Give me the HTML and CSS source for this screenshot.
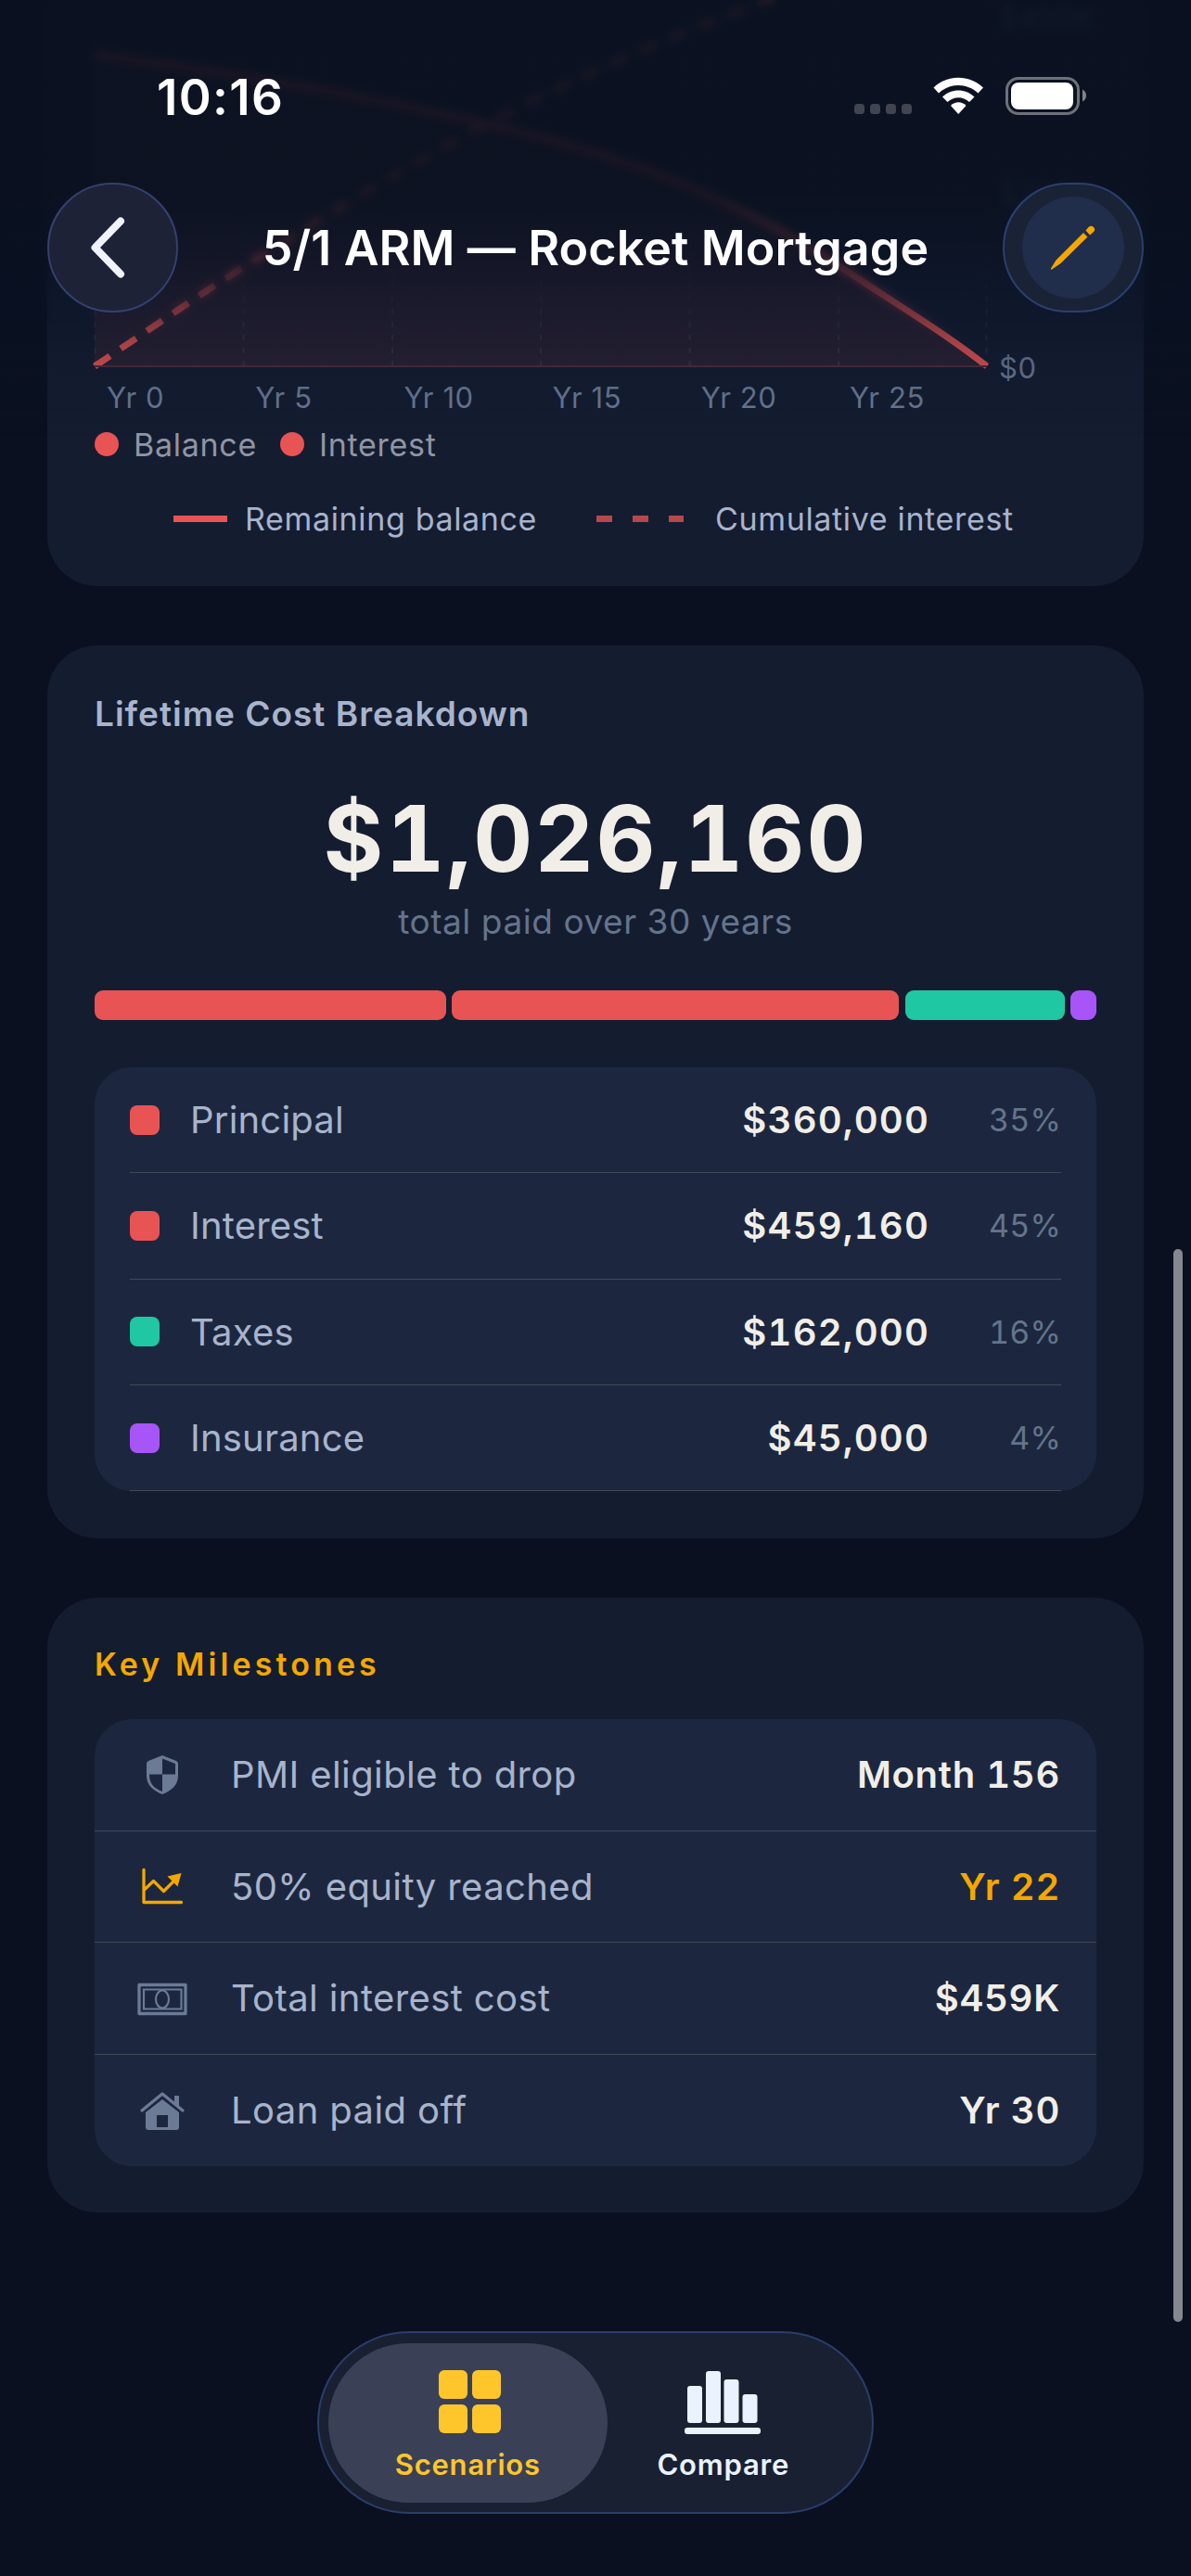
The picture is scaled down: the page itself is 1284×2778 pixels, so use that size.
FILE: index.html
```
<!doctype html>
<html lang="en">
<head>
<meta charset="UTF-8">
<title>5/1 ARM — Rocket Mortgage</title>
<link rel="stylesheet" href="styles.css">
</head>

<body>
  <main class="content">
    <section class="card chart-card">
      <div class="chart">
        <svg class="plot" width="962" height="400" viewBox="102 0 962 400">
          <g class="grid">
            <path d="M102.5 395V0M262.5 395V0M423 395V0M583 395V0M743.5 395V0M904 395V0M1063.5 395V0"/>
          </g>
          <path class="area" d="M102 59C250 78 400 104 540 137C680 170 800 217 908 289C965 327 1020 360 1064 395H102Z"/>
          <path class="balance" d="M102 59C250 78 400 104 540 137C680 170 800 217 908 289C965 327 1020 360 1064 395"/>
          <path class="interest" d="M102 395L219 316C290 270 350 232 410 198C520 132 680 50 845 -4"/>
          <path class="axis" d="M102 395H1064"/>
        </svg>
        <div class="y-labels">
          <span>$400K</span><span>$200K</span><span>$0</span>
        </div>
      </div>
      <div class="x-labels">
        <span>Yr 0</span><span>Yr 5</span><span>Yr 10</span><span>Yr 15</span><span>Yr 20</span><span>Yr 25</span>
      </div>
      <div class="series">
        <span class="dot"></span><span>Balance</span>
        <span class="dot second"></span><span>Interest</span>
      </div>
      <div class="legend">
        <i class="solid"></i><span class="remaining">Remaining balance</span>
        <i class="dashed"></i><span class="cumulative">Cumulative interest</span>
      </div>
    </section>

    <section class="card cost-card">
      <h2>Lifetime Cost Breakdown</h2>
      <p class="total">$1,026,160</p>
      <p class="total-note">total paid over 30 years</p>
      <div class="bar">
        <span class="red" style="width: 379px"></span>
        <span class="red" style="width: 482px"></span>
        <span class="green" style="width: 172px"></span>
        <span class="purple" style="width: 28px"></span>
      </div>
      <ul class="costs">
        <li><i class="red"></i><span class="name">Principal</span><b>$360,000</b><em>35%</em></li>
        <li><i class="red"></i><span class="name">Interest</span><b>$459,160</b><em>45%</em></li>
        <li><i class="green"></i><span class="name">Taxes</span><b>$162,000</b><em>16%</em></li>
        <li><i class="purple"></i><span class="name">Insurance</span><b>$45,000</b><em>4%</em></li>
      </ul>
    </section>

    <section class="card milestone-card">
      <h2>Key Milestones</h2>
      <ul class="milestones">
        <li>
          <svg width="56" height="48" viewBox="0 0 56 48"><path fill-rule="evenodd" d="M28 3L43 9Q45 10 45 12V25C45 35 38 41 28 45C18 41 11 35 11 25V12Q11 10 13 9ZM28 6.500V23.500H42V12ZM28 23.500H14C14 33 18 38 28 42Z"/></svg>
          <span class="name">PMI eligible to drop</span><b>Month 156</b>
        </li>
        <li class="gold">
          <svg width="56" height="48" viewBox="0 0 56 48"><path class="line" stroke-linecap="round" stroke-linejoin="round" d="M8 6.500V41.500H48.500M8.500 28L18.500 18.500L29.500 29.500L42 17"/><path d="M33.500 13.500L48.500 10L44.500 24.500Z"/></svg>
          <span class="name">50% equity reached</span><b>Yr 22</b>
        </li>
        <li>
          <svg width="56" height="48" viewBox="0 0 56 48"><path class="line" stroke-linejoin="round" d="M3 9.500H53V40.500H3Z"/><path class="line thin" d="M8 14.500H48.500V35.500H8Z"/><ellipse class="line thin" cx="28" cy="25" rx="7" ry="9.500"/></svg>
          <span class="name">Total interest cost</span><b>$459K</b>
        </li>
        <li>
          <svg width="56" height="48" viewBox="0 0 56 48"><path class="line" stroke-linecap="round" stroke-linejoin="round" d="M6 24L28 6L50 24"/><path d="M41 8H46V20L41 16Z"/><path fill-rule="evenodd" d="M28 12L46 26V42Q46 45 43 45H13Q10 45 10 42V26ZM22 29V42H34V29Z"/></svg>
          <span class="name">Loan paid off</span><b>Yr 30</b>
        </li>
      </ul>
    </section>
  </main>

  <div class="scrollbar"></div>

  <header class="header">
    <div class="status">
      <span class="time">10:16</span>
      <svg width="254" height="56" viewBox="0 0 254 56">
        <g fill="#414552"><rect x="1" y="34" width="11" height="11" rx="3.500"/><rect x="18" y="34" width="11" height="11" rx="3.500"/><rect x="35" y="34" width="11" height="11" rx="3.500"/><rect x="52" y="34" width="11" height="11" rx="3.500"/></g>
        <g fill="#fff">
          <path d="M86.500 16.500C101.500 2 125 2 140 16.500L134.500 22.500C122.500 11 104 11 92 22.500Z"/>
          <path d="M96 26.500C105.500 17 121 17 130.500 26.500L125 32C118 25.500 108.500 25.500 101.500 32Z"/>
          <path d="M105 36C109.500 31 117 31 121.500 36L113.200 45Z"/>
        </g>
        <rect x="165.500" y="6.500" width="77" height="38" rx="12.500" fill="none" stroke="#6d717b" stroke-width="3"/>
        <rect x="170" y="11" width="67" height="29" rx="8" fill="#fff"/>
        <path d="M247 18.500Q251 20.500 251 25T247 31.500Z" fill="#80838c"/>
      </svg>
    </div>
    <div class="toolbar">
      <a href="#" class="button back" title="Back">
        <svg width="70" height="70" viewBox="0 0 70 70"><path d="M43 6.500L15.500 35L43 63.500"/></svg>
      </a>
      <h1>5/1 ARM — Rocket Mortgage</h1>
      <a href="#" class="button edit" title="Edit">
        <span><svg width="56" height="56" viewBox="0 0 56 56"><path d="M39 12L43.500 16.500L14.500 45L5 51.500Q3.500 52 4 50.500L9.500 41.500ZM41.500 9.500L44.500 6Q47.500 3.500 50 6T50 11L46 14.500Z"/></svg></span>
      </a>
    </div>
  </header>

  <nav class="tabs" role="navigation">
    <a href="#" class="tab active">
      <svg width="84" height="72" viewBox="0 0 84 72"><rect x="11" y="1" width="31" height="31" rx="6"/><rect x="47" y="1" width="31" height="31" rx="6"/><rect x="11" y="38" width="31" height="31" rx="6"/><rect x="47" y="38" width="31" height="31" rx="6"/></svg>
      <span>Scenarios</span>
    </a>
    <a href="#" class="tab">
      <svg width="84" height="72" viewBox="0 0 84 72"><rect x="3" y="18" width="16" height="40" rx="3"/><rect x="23" y="2" width="16" height="56" rx="3"/><rect x="42.500" y="11" width="16" height="47" rx="3"/><rect x="62.500" y="27" width="16" height="31" rx="3"/><rect x="0" y="63" width="82" height="7" rx="3"/></svg>
      <span>Compare</span>
    </a>
  </nav>
</body>
</html>
```
FILE: styles.css
```
* {
    box-sizing: border-box;
}
body {
    margin: 0;
    width: 1284px;
    height: 2778px;
    overflow: hidden;
    position: relative;
    background-color: #0a101f;
    font-family: Inter, "Liberation Sans", sans-serif;
    color: #a8b4cc;
}
ul, p, h1, h2 {
    margin: 0;
    padding: 0;
}
ul {
    list-style: none;
}
a {
    color: inherit;
    text-decoration: none;
}
b {
    font-weight: 600;
    color: #f1eee8;
}
em {
    font-style: normal;
}
.red { background-color: #e85454; }
.green { background-color: #1fc8a2; }
.purple { background-color: #a855f7; }

/* cards */
.content {
    padding: 0 51px;
    display: flex;
    flex-direction: column;
    gap: 64px;
}
.card {
    background-color: #141c30;
    border-radius: 54px;
    padding: 0 51px;
}

/* chart */
.chart-card {
    height: 632px;
    border-top-left-radius: 0;
    border-top-right-radius: 0;
}
.chart {
    display: flex;
    height: 400px;
}
.plot {
    flex: none;
    overflow: visible;
}
.plot path {
    fill: none;
}
.plot .grid path {
    stroke: #252d42;
    stroke-width: 2;
    stroke-dasharray: 6 8;
}
.plot .area {
    fill: #e85454;
    fill-opacity: .11;
}
.plot .balance {
    stroke: #e85454;
    stroke-width: 7;
}
.plot .interest {
    stroke: #e85454;
    stroke-width: 7;
    stroke-dasharray: 20 14;
}
.plot .axis {
    stroke: #4e2d3d;
    stroke-width: 2;
}
.y-labels {
    display: flex;
    flex-direction: column;
    justify-content: space-between;
    margin: 1px 0 -16px 13px;
    font-size: 31px;
    line-height: 38px;
    letter-spacing: .5px;
    color: #6b7a95;
}
.x-labels {
    display: grid;
    grid-template-columns: repeat(6, 160.2px);
    margin-left: 13px;
    padding-top: 10px;
    font-size: 31px;
    line-height: 38px;
    letter-spacing: .6px;
    color: #6b7a95;
}
.series {
    display: flex;
    align-items: center;
    height: 42px;
    margin-top: 10px;
    font-size: 34px;
    letter-spacing: .7px;
    color: #9095a3;
}
.dot {
    width: 26px;
    height: 26px;
    margin-right: 16px;
    border-radius: 50%;
    background-color: #e85454;
}
.dot.second {
    margin-left: 25px;
}
.legend {
    display: flex;
    align-items: center;
    height: 42px;
    margin: 38px 0 0 85px;
    font-size: 34px;
    letter-spacing: .65px;
    white-space: nowrap;
}
.legend i {
    height: 7px;
    flex: none;
}
.solid {
    width: 58px;
    margin-right: 19px;
    background-color: #e85454;
}
.remaining {
    width: 379px;
}
.dashed {
    width: 94px;
    margin-right: 34px;
    background: repeating-linear-gradient(90deg, #b6484b 0 17px, transparent 17px 39px);
}

/* lifetime cost */
.cost-card {
    height: 963px;
    padding-top: 51px;
}
.cost-card h2 {
    font-size: 37px;
    font-weight: 600;
    line-height: 46px;
    letter-spacing: 1px;
}
.total {
    margin-top: 49px;
    font-size: 99px;
    font-weight: 700;
    line-height: 124px;
    letter-spacing: 2.1px;
    font-variant-numeric: tabular-nums;
    text-align: center;
    color: #f1eee8;
}
.total-note {
    margin-top: 4px;
    font-size: 37px;
    line-height: 48px;
    letter-spacing: .55px;
    text-align: center;
    color: #64748b;
}
.bar {
    display: flex;
    justify-content: space-between;
    height: 32px;
    margin-top: 50px;
}
.bar span {
    border-radius: 9px;
}
.costs {
    height: 457px;
    margin-top: 51px;
    padding: 0 38px;
    border-radius: 40px;
    background-color: #1c273f;
}
.costs li {
    display: flex;
    align-items: center;
    height: 114.3px;
    border-bottom: 1.5px solid #424857;
    font-size: 40px;
    letter-spacing: .2px;
}
.costs i {
    width: 32px;
    height: 32px;
    margin-right: 33px;
    border-radius: 8px;
}
.name {
    flex: 1;
}
.costs b {
    letter-spacing: 1.2px;
    font-variant-numeric: tabular-nums;
}
.milestones b {
    letter-spacing: .7px;
    font-variant-numeric: tabular-nums;
}
.costs em {
    width: 142px;
    font-size: 34px;
    letter-spacing: .2px;
    font-variant-numeric: tabular-nums;
    text-align: right;
    color: #64748b;
}

/* milestones */
.milestone-card {
    height: 663px;
    padding-top: 51px;
}
.milestone-card h2 {
    font-size: 34px;
    font-weight: 600;
    line-height: 42px;
    letter-spacing: 4.1px;
    color: #f4a700;
}
.milestones {
    height: 482px;
    margin-top: 38px;
    border-radius: 40px;
    background-color: #1c273f;
}
.milestones li {
    display: flex;
    align-items: center;
    height: 120.5px;
    padding: 0 39px 0 45px;
    font-size: 40px;
    letter-spacing: .4px;
    border-bottom: 1.5px solid #424857;
}
.milestones li:last-child {
    border-bottom: none;
}
.milestones svg {
    margin-right: 46px;
    fill: #6b7a95;
    color: #6b7a95;
}
.milestones .line {
    fill: none;
    stroke: currentColor;
    stroke-width: 3.3;
}
.milestones .thin {
    stroke-width: 2.2;
}
.milestones .gold svg {
    fill: #f4a700;
    color: #f4a700;
}
.gold b {
    color: #f4a700;
}

.scrollbar {
    position: absolute;
    top: 1347px;
    right: 9px;
    width: 10px;
    height: 1157px;
    border-radius: 5px;
    background-color: #86888f;
}

/* header floats above the scrolled content */
.header {
    position: absolute;
    top: 0;
    left: 0;
    z-index: 1;
    width: 100%;
    height: 480px;
    color: #fff;
}
.header:before,
.header:after {
    content: '';
    position: absolute;
    top: 0;
    left: 0;
    right: 0;
    bottom: 0;
    z-index: -1;
}
.header:before {
    backdrop-filter: blur(5px);
    -webkit-mask-image: linear-gradient(#000 270px, transparent 370px);
    mask-image: linear-gradient(#000 270px, transparent 370px);
}
.header:after {
    background: linear-gradient(rgba(10, 17, 32, .9) 210px, rgba(10, 18, 34, .76) 265px, rgba(10, 20, 38, .45) 330px, rgba(12, 24, 42, .18) 400px, rgba(16, 28, 46, 0) 470px);
}
.status {
    display: flex;
    justify-content: space-between;
    height: 197px;
    padding: 78px 110px 0 169px;
}
.time {
    font-size: 53px;
    font-weight: 600;
    line-height: 54px;
    letter-spacing: 1.3px;
}
.toolbar {
    display: flex;
    align-items: center;
    justify-content: space-between;
    height: 140px;
    padding: 0 51px;
}
.toolbar h1 {
    margin-left: 11px;
    font-size: 52px;
    font-weight: 600;
    letter-spacing: .1px;
    white-space: nowrap;
}
.button {
    display: flex;
    align-items: center;
    justify-content: center;
    width: 141px;
    height: 140px;
    border: 2px solid #34406f;
    border-radius: 70px;
    background-color: #1e2236;
}
.back svg {
    fill: none;
    stroke: #f0f3ff;
    stroke-width: 8;
    stroke-linecap: round;
    stroke-linejoin: round;
}
.edit {
    width: 152px;
    background-color: #1a2236;
    border-color: #2b3f70;
}
.edit span {
    display: flex;
    align-items: center;
    justify-content: center;
    width: 110px;
    height: 110px;
    border-radius: 50%;
    background-color: #202d4b;
}
.edit svg {
    fill: #f4a700;
}

/* bottom tabs */
.tabs {
    position: absolute;
    left: 342px;
    top: 2514px;
    width: 600px;
    height: 197px;
    display: flex;
    padding: 11px 10px;
    border: 2px solid #2b3d6b;
    border-radius: 99px;
    background-color: #182032;
    color: #eaf2ff;
}
.tab {
    display: flex;
    flex-direction: column;
    align-items: center;
    width: 301px;
    height: 172px;
    padding-top: 28px;
    border-radius: 86px;
    font-size: 31px;
    font-weight: 600;
    line-height: 38px;
    letter-spacing: .8px;
}
.tab + .tab {
    margin-left: -25px;
}
.tab span {
    margin-top: 12px;
}
.tab svg {
    fill: #eaf2ff;
}
.tab.active {
    background-color: #3a4156;
    color: #ffc62b;
}
.tab.active svg {
    fill: #ffc62b;
}
```
